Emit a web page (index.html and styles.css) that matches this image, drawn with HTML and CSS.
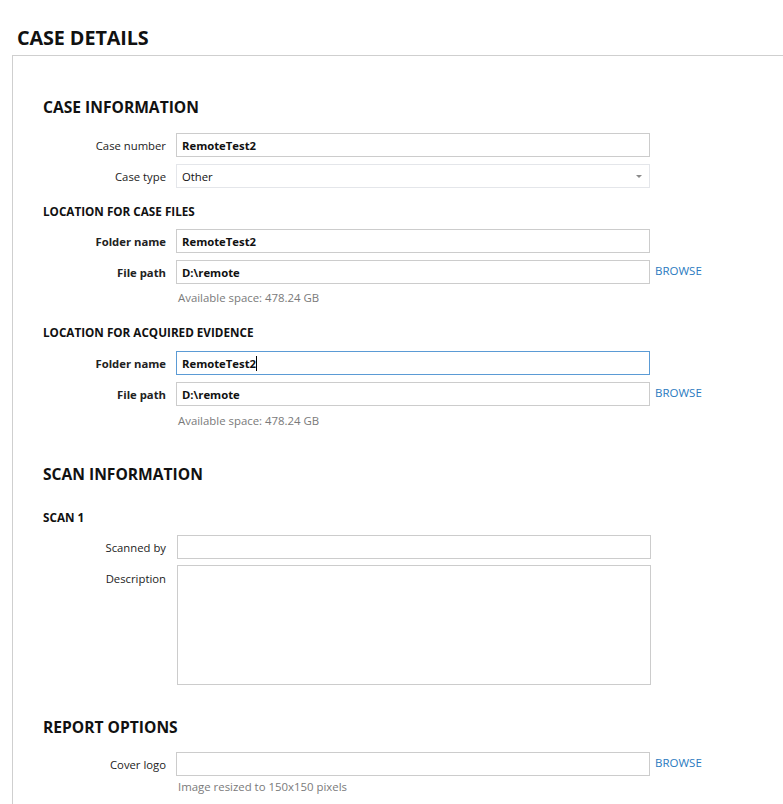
FILE: index.html
```html
<!DOCTYPE html>
<html>
<head>
<meta charset="utf-8">
<link rel="stylesheet" href="styles.css">
</head>
<body>
<div class="page">
  <div class="header"><h1 class="title">CASE DETAILS</h1></div>
  <div class="panel">
    <h2 class="section s-case">CASE INFORMATION</h2>
    <div class="row">
      <div class="label">Case number</div>
      <div class="field bold">RemoteTest2</div>
    </div>
    <div class="row gap7">
      <div class="label">Case type</div>
      <div class="field select">Other<span class="arrow"></span></div>
    </div>

    <h3 class="sub sub1">LOCATION FOR CASE FILES</h3>
    <div class="row">
      <div class="label bold">Folder name</div>
      <div class="field bold">RemoteTest2</div>
    </div>
    <div class="row gap7">
      <div class="label bold">File path</div>
      <div class="field bold">D:\remote</div>
      <a class="browse">BROWSE</a>
    </div>
    <div class="hint h1">Available space: 478.24 GB</div>

    <h3 class="sub sub2">LOCATION FOR ACQUIRED EVIDENCE</h3>
    <div class="row">
      <div class="label bold">Folder name</div>
      <div class="field bold focused">RemoteTest2<span class="caret"></span></div>
    </div>
    <div class="row gap7">
      <div class="label bold">File path</div>
      <div class="field bold">D:\remote</div>
      <a class="browse">BROWSE</a>
    </div>
    <div class="hint h2">Available space: 478.24 GB</div>

    <h2 class="section s-scan">SCAN INFORMATION</h2>
    <h3 class="sub sub3">SCAN 1</h3>
    <div class="row shift">
      <div class="label">Scanned by</div>
      <div class="field"></div>
    </div>
    <div class="row top gap6 shift">
      <div class="label desc">Description</div>
      <div class="field area"></div>
    </div>

    <h2 class="section s-report">REPORT OPTIONS</h2>
    <div class="row">
      <div class="label">Cover logo</div>
      <div class="field"></div>
      <a class="browse">BROWSE</a>
    </div>
    <div class="hint h3">Image resized to 150x150 pixels</div>
  </div>
</div>
</body>
</html>
```

FILE: styles.css
```css
* { box-sizing: border-box; }
html, body {
  margin: 0;
  padding: 0;
  background: #ffffff;
  font-family: "Open Sans", "Noto Sans", "Liberation Sans", sans-serif;
  color: #1b1b1b;
}
.page {
  width: 783px;
  height: 804px;
  overflow: hidden;
}
.header {
  height: 55px;
  padding: 24px 0 0 17px;
}
.title {
  margin: 0;
  font-size: 19.8px;
  line-height: 28px;
  font-weight: 700;
  color: #111;
  letter-spacing: -0.1px;
}
.panel {
  margin-left: 12px;
  border-top: 1px solid #cfcfcf;
  border-left: 1px solid #cfcfcf;
  padding: 41px 0 40px 30px;
}
.section {
  margin: 0;
  font-size: 15.6px;
  line-height: 20px;
  font-weight: 700;
  color: #111;
}
.s-case { margin-bottom: 16px; }
.s-scan { margin-top: 35px; }
.s-report { margin-top: 32px; margin-bottom: 15px; }
.sub {
  margin: 0;
  font-size: 11.7px;
  line-height: 16px;
  font-weight: 700;
  color: #111;
}
.sub1 { margin-top: 15px; margin-bottom: 10px; }
.sub2 { margin-top: 18px; margin-bottom: 11px; }
.sub3 { margin-top: 25px; margin-bottom: 10px; }
.row {
  display: flex;
  align-items: center;
  gap: 10px;
}
.row.top { align-items: flex-start; }
.row.gap7 { margin-top: 7px; }
.row.gap6 { margin-top: 6px; }
.row.shift .field { margin-left: 1px; }
.label {
  width: 123px;
  flex: none;
  text-align: right;
  font-size: 11.3px;
  color: #222;
  line-height: 16px;
  padding-top: 2px;
}
.label.desc { padding-top: 6px; }
.bold { font-weight: 700; }
.field {
  position: relative;
  width: 474px;
  height: 24px;
  flex: none;
  border: 1px solid #cccccc;
  background: #fff;
  padding: 1px 5px 0;
  font-size: 11.3px;
  line-height: 22px;
  color: #111;
  white-space: nowrap;
}
.field.select {
  border-color: #e4e6ea;
  font-weight: 400;
}
.field.focused { border-color: #5b9bd5; }
.field.area { height: 120px; }
.arrow {
  position: absolute;
  right: 7px;
  top: 10px;
  width: 0;
  height: 0;
  border-left: 3px solid transparent;
  border-right: 3px solid transparent;
  border-top: 3px solid #8a8a8a;
}
.caret {
  display: inline-block;
  width: 1px;
  height: 15px;
  background: #000;
  vertical-align: -3px;
}
.browse {
  margin-left: -5px;
  font-size: 11.5px;
  color: #2a7ac0;
  line-height: 16px;
  margin-top: -3px;
}
.hint {
  margin-left: 135px;
  font-size: 11.4px;
  line-height: 16px;
  color: #7a7a7a;
}
.h1 { margin-top: 6px; }
.h2 { margin-top: 7px; }
.h3 { margin-top: 3px; }
```
